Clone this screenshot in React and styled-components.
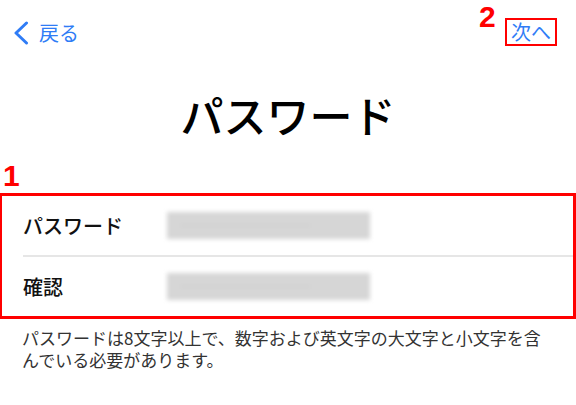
import styled, { createGlobalStyle } from "styled-components";

const Global = createGlobalStyle`
  html, body {
    margin: 0;
    padding: 0;
    background: #fff;
  }
  body {
    font-family: "Noto Sans CJK JP", "Noto Sans", sans-serif;
    width: 576px;
    height: 405px;
    overflow: hidden;
  }
`;

const Page = styled.div`
  width: 576px;
  height: 405px;
  display: flex;
  flex-direction: column;
`;

const NavBar = styled.div`
  display: flex;
  justify-content: space-between;
  align-items: center;
  height: 44px;
  margin-top: 11px;
  padding: 0 19px 0 13px;
`;

const NavButton = styled.div`
  position: relative;
  display: flex;
  align-items: center;
  gap: 10px;
  color: #2f7cf6;
  font-size: 20px;
  line-height: 24px;
  cursor: pointer;
`;

const Outlined = styled.span`
  border: 2px solid #f00;
  padding: 0 4px 1px;
  margin-top: -3px;
  line-height: 23px;
`;

const Marker = styled.div`
  color: #f00;
  font-family: "Liberation Sans", Arial, sans-serif;
  font-weight: bold;
  font-size: 30px;
  line-height: 34px;
`;

const FloatMarker = styled(Marker)`
  position: absolute;
  left: -26px;
  top: -21px;
`;

const Title = styled.h1`
  margin: 34px 0 0;
  text-align: center;
  font-size: 43px;
  line-height: 50px;
  font-weight: 500;
  color: #000;
`;

const StepMarker = styled(Marker)`
  margin: 20px 0 0 3px;
`;

const FormBox = styled.div`
  margin-top: 0;
  border: 3px solid #f00;
  border-left-width: 2px;
  display: flex;
  flex-direction: column;
`;

const Row = styled.div`
  display: flex;
  align-items: center;
  height: 59px;
  margin-left: 21px;
  border-top: ${({ first }) => (first ? "none" : "2px solid #e6e6e6")};
`;

const Label = styled.div`
  width: 144px;
  font-size: 20px;
  font-weight: 500;
  color: #111;
`;

const Blurred = styled.div`
  width: 203px;
  height: 27px;
  background: #d6d6d6;
  filter: blur(2px);
  position: relative;
  &::after {
    content: "";
    position: absolute;
    left: 14px;
    right: 60px;
    top: 13px;
    border-top: 1px dotted #bdbdbd;
  }
`;

const Note = styled.p`
  margin: 8px 22px 0 22px;
  font-size: 17px;
  line-height: 22px;
  color: #333;
`;

function Chevron() {
  return (
    <svg width="16" height="24" viewBox="0 0 16 24">
      <polyline
        points="13.5,2 3,12 13.5,22"
        fill="none"
        stroke="#2f7cf6"
        strokeWidth="3"
        strokeLinecap="round"
        strokeLinejoin="round"
      />
    </svg>
  );
}

export default function App() {
  return (
    <Page>
      <Global />
      <NavBar>
        <NavButton>
          <Chevron />
          <span>戻る</span>
        </NavButton>
        <NavButton>
          <FloatMarker>2</FloatMarker>
          <Outlined>次へ</Outlined>
        </NavButton>
      </NavBar>
      <Title>パスワード</Title>
      <StepMarker>1</StepMarker>
      <FormBox>
        <Row first>
          <Label>パスワード</Label>
          <Blurred />
        </Row>
        <Row>
          <Label>確認</Label>
          <Blurred />
        </Row>
      </FormBox>
      <Note>
        パスワードは8文字以上で、数字および英文字の大文字と小文字を含んでいる必要があります。
      </Note>
    </Page>
  );
}
